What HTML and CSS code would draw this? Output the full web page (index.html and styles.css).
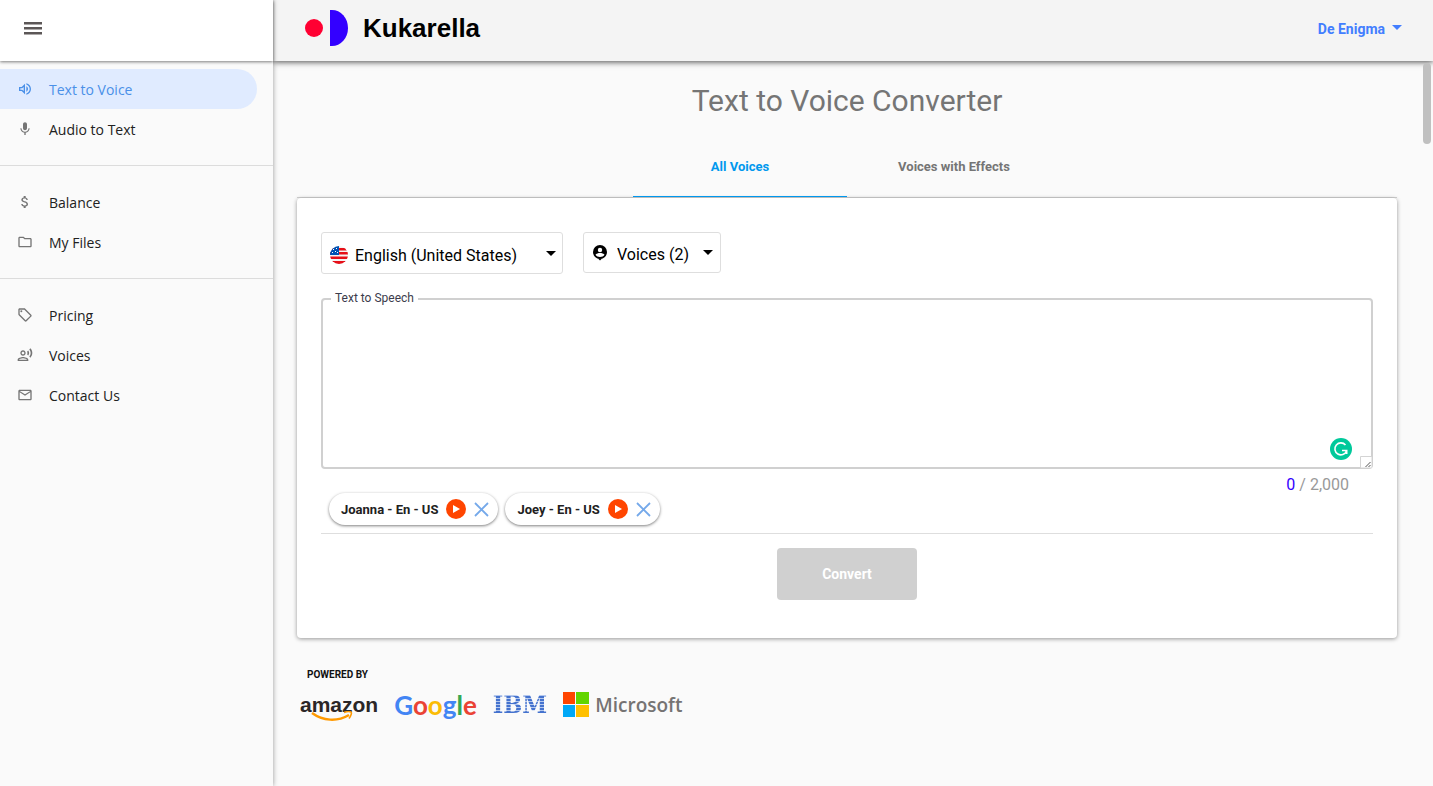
FILE: index.html
```html
<!DOCTYPE html>
<html lang="en">
<head>
  <meta charset="utf-8">
  <title>Text to Voice Converter - Kukarella</title>
  <link rel="stylesheet" href="styles.css">
</head>
<body>
  <div class="app">
    <aside class="sidebar">
      <div class="sidebar-top">
        <button class="menu-btn" type="button" aria-label="Menu">
          <svg width="24" height="24" viewBox="0 0 24 24"><path d="M3 5h18v2.500H3zM3 10h18v2.500H3zM3 15h18v2.500H3z"/></svg>
        </button>
      </div>
      <nav class="nav">
        <a class="nav-item active" href="#">
          <svg viewBox="0 0 24 24"><path d="M3 9v6h4l5 5V4L7 9H3zm7-.17v6.34L7.83 13H5v-2h2.83L10 8.83zM16.5 12c0-1.77-1.02-3.29-2.5-4.03v8.05c1.48-.73 2.5-2.25 2.5-4.02zM14 3.23v2.06c2.89.86 5 3.54 5 6.71s-2.11 5.85-5 6.71v2.06c4.01-.91 7-4.49 7-8.77s-2.99-7.86-7-8.77z"/></svg>
          <span>Text to Voice</span>
        </a>
        <a class="nav-item" href="#">
          <svg viewBox="0 0 24 24"><path d="M12 14c1.66 0 3-1.34 3-3V5c0-1.66-1.34-3-3-3S9 3.34 9 5v6c0 1.66 1.34 3 3 3zm5.3-3c0 3-2.54 5.1-5.3 5.1S6.7 14 6.7 11H5c0 3.41 2.72 6.23 6 6.72V21h2v-3.28c3.28-.48 6-3.3 6-6.72h-1.7z"/></svg>
          <span>Audio to Text</span>
        </a>
        <hr>
        <a class="nav-item" href="#">
          <svg viewBox="0 0 24 24"><path d="M11.8 10.9c-2.27-.59-3-1.2-3-2.15 0-1.09 1.01-1.85 2.7-1.85 1.78 0 2.44.85 2.5 2.1h2.21c-.07-1.72-1.12-3.3-3.21-3.81V3h-3v2.16c-1.94.42-3.5 1.68-3.5 3.61 0 2.31 1.91 3.46 4.7 4.13 2.5.6 3 1.48 3 2.41 0 .69-.49 1.79-2.7 1.79-2.06 0-2.87-.92-2.98-2.1h-2.2c.12 2.19 1.76 3.42 3.68 3.83V21h3v-2.15c1.95-.37 3.5-1.5 3.5-3.55 0-2.84-2.43-3.81-4.7-4.4z"/></svg>
          <span>Balance</span>
        </a>
        <a class="nav-item" href="#">
          <svg viewBox="0 0 24 24"><path d="M20 6h-8l-2-2H4c-1.1 0-2 .9-2 2v12c0 1.1.9 2 2 2h16c1.1 0 2-.9 2-2V8c0-1.1-.9-2-2-2zm0 12H4V6h5.17l2 2H20v10z"/></svg>
          <span>My Files</span>
        </a>
        <hr>
        <a class="nav-item" href="#">
          <svg viewBox="0 0 24 24"><path d="M21.41 11.58l-9-9C12.05 2.22 11.55 2 11 2H4c-1.1 0-2 .9-2 2v7c0 .55.22 1.05.59 1.42l9 9c.36.36.86.58 1.41.58s1.05-.22 1.41-.59l7-7c.37-.36.59-.86.59-1.41s-.23-1.06-.59-1.42zM13 20.01L4 11V4h7v-.01l9 9-7 7.02z"/><circle cx="6.5" cy="6.5" r="1.5"/></svg>
          <span>Pricing</span>
        </a>
        <a class="nav-item" href="#">
          <svg viewBox="0 0 24 24"><path d="M9 13c2.21 0 4-1.79 4-4s-1.79-4-4-4-4 1.79-4 4 1.79 4 4 4zm0-6c1.1 0 2 .9 2 2s-.9 2-2 2-2-.9-2-2 .9-2 2-2zM9 15c-2.67 0-8 1.34-8 4v2h16v-2c0-2.66-5.33-4-8-4zm-6 4c.22-.72 3.31-2 6-2 2.7 0 5.8 1.29 6 2H3zM15.08 7.05c.84 1.18.84 2.71 0 3.89l1.68 1.69c2.02-2.02 2.02-5.07 0-7.27l-1.68 1.69zM20.07 2l-1.63 1.63c2.77 3.02 2.77 7.56 0 10.74L20.07 16c3.9-3.89 3.91-9.95 0-14z"/></svg>
          <span>Voices</span>
        </a>
        <a class="nav-item" href="#">
          <svg viewBox="0 0 24 24"><path d="M22 6c0-1.100-.9-2-2-2H4c-1.100 0-2 .9-2 2v12c0 1.100.9 2 2 2h16c1.100 0 2-.9 2-2V6zm-2 0l-8 5-8-5h16zm0 12H4V8l8 5 8-5v10z"/></svg>
          <span>Contact Us</span>
        </a>
      </nav>
    </aside>

    <div class="main">
      <header class="header">
        <a class="brand" href="#">
          <svg width="44" height="36" viewBox="0 0 44 36"><circle cx="9" cy="18" r="9" fill="#ff0032"/><path d="M25 0h2a16 18 0 0 1 16 18a16 18 0 0 1-16 18h-2z" fill="#3300ff"/></svg>
          <span>Kukarella</span>
        </a>
        <button class="user-btn" type="button">
          <span>De Enigma</span>
          <svg width="10" height="5" viewBox="0 0 10 5"><path d="M0 0h10L5 5z"/></svg>
        </button>
      </header>

      <main class="content">
        <h1>Text to Voice Converter</h1>
        <div class="tabs">
          <button class="tab active" type="button">All Voices</button>
          <button class="tab" type="button">Voices with Effects</button>
        </div>

        <form class="card">
          <div class="filters">
            <div class="select-box language">
              <svg class="lead" width="18" height="18" viewBox="0 0 18 18">
                <clipPath id="round"><circle cx="9" cy="9" r="9"/></clipPath>
                <g clip-path="url(#round)">
                  <path d="M0 0h18v18H0z" fill="#f4f4f4"/>
                  <path d="M0 2h18v2.500H0zM0 6h18v2.500H0zM0 10.500h18V13H0zM0 15h18v3H0z" fill="#e60f18"/>
                  <path d="M0 0h9v9H0z" fill="#0052b4"/>
                  <path d="M3 3h1v1H3zM6 2h1v1H6zM5 5h1v1H5zM2 6h1v1H2zM7 6h1v1H7z" fill="#fff"/>
                </g>
              </svg>
              <select aria-label="Language"><option>English (United States)</option></select>
              <svg class="arrow" width="10" height="5" viewBox="0 0 10 5"><path d="M0 0h10L5 5z"/></svg>
            </div>
            <div class="select-box voices">
              <svg class="lead" width="16" height="16" viewBox="0 0 16 16"><circle cx="8" cy="7" r="7"/><path d="M6 13.500h4l-2 2z"/><circle cx="8" cy="5" r="2.200" fill="#fff"/><path d="M3.500 9.800C4 8.500 6.500 8 8 8s4 .5 4.500 1.800C11.500 11.300 10 12 8 12s-3.500-.7-4.500-2.200z" fill="#fff"/></svg>
              <select aria-label="Voices"><option>Voices (2)</option></select>
              <svg class="arrow" width="10" height="5" viewBox="0 0 10 5"><path d="M0 0h10L5 5z"/></svg>
            </div>
          </div>

          <div class="text-field">
            <label for="speech">Text to Speech</label>
            <textarea id="speech"></textarea>
            <svg class="grammar" width="22" height="22" viewBox="0 0 22 22"><circle cx="11" cy="11" r="11" fill="#00c99b"/><path d="M15.500 7A6 6 0 1 0 16.500 13M12 12.500h4.700V16" fill="none" stroke="#fff" stroke-width="1.600"/></svg>
            <svg class="grip" width="12" height="12" viewBox="0 0 12 12"><path d="M.5 12V.5H12V12z" fill="#fff" stroke="#d4d4d4"/><path d="M5.500 11l5-5M8.500 11l2-2" stroke="#555"/></svg>
          </div>
          <p class="counter"><span>0</span> / 2,000</p>

          <div class="chips">
            <div class="chip">
              Joanna - En - US
              <button type="button" aria-label="Play Joanna"><svg width="20" height="20" viewBox="0 0 20 20"><circle cx="10" cy="10" r="10" fill="#ff4500"/><path d="M7 6v8l7-4z" fill="#fff"/></svg></button>
              <button type="button" aria-label="Remove Joanna"><svg width="15" height="15" viewBox="0 0 15 15"><path d="M1 1l13 13M14 1L1 14" stroke="#75a9ea" stroke-width="1.800"/></svg></button>
            </div>
            <div class="chip">
              Joey - En - US
              <button type="button" aria-label="Play Joey"><svg width="20" height="20" viewBox="0 0 20 20"><circle cx="10" cy="10" r="10" fill="#ff4500"/><path d="M7 6v8l7-4z" fill="#fff"/></svg></button>
              <button type="button" aria-label="Remove Joey"><svg width="15" height="15" viewBox="0 0 15 15"><path d="M1 1l13 13M14 1L1 14" stroke="#75a9ea" stroke-width="1.800"/></svg></button>
            </div>
          </div>

          <div class="actions">
            <button class="convert" type="submit" disabled>Convert</button>
          </div>
        </form>

        <section class="powered">
          <h2>POWERED BY</h2>
          <div class="logos">
            <div class="amazon">
              amazon
              <svg width="42" height="11" viewBox="0 0 42 11"><path d="M1 2c11 8 25 9 37 2" fill="none" stroke="#ff9900" stroke-width="2.500"/><path d="M33 1.500c3-1 6-1 7-.5s0 4-2 6.500" fill="none" stroke="#ff9900" stroke-width="1.600"/></svg>
            </div>
            <div class="google"><span class="blue">G</span><span class="red">o</span><span class="yellow">o</span><span class="blue">g</span><span class="green">l</span><span class="red">e</span></div>
            <div class="ibm">IBM</div>
            <div class="microsoft">
              <svg width="26" height="26" viewBox="0 0 26 26"><path d="M0 0h12v12H0z" fill="#ff4500"/><path d="M13 0h13v12H13z" fill="#62d500"/><path d="M0 13h12v12H0z" fill="#00a8f7"/><path d="M13 13h13v12H13z" fill="#ffc000"/></svg>
              Microsoft
            </div>
          </div>
        </section>
      </main>
      <div class="scroll-thumb"></div>
    </div>
  </div>
</body>
</html>
```
FILE: styles.css
```css
* { box-sizing: border-box; }
body {
  margin: 0;
  font-family: Roboto, sans-serif;
  background: #fafafa;
  color: #212121;
}
button {
  border: 0;
  padding: 0;
  background: none;
  font-family: inherit;
  cursor: pointer;
}
svg { display: block; flex-shrink: 0; }
.app {
  display: grid;
  grid-template-columns: 273px 1fr;
  min-height: 100vh;
}

/* sidebar */
.sidebar {
  position: relative;
  z-index: 2;
  background: #fafafa;
  box-shadow: 0 0 5px rgba(0,0,0,0.4);
}
.sidebar-top {
  display: flex;
  align-items: center;
  height: 61px;
  padding: 0 21px 4px;
  background: #fff;
  box-shadow: 0 1px 3px rgba(0,0,0,0.5);
}
.menu-btn { fill: #5c5757; }
.nav { padding-top: 8px; }
.nav-item {
  display: flex;
  align-items: center;
  gap: 16px;
  height: 40px;
  margin-right: 16px;
  padding-left: 17px;
  border-radius: 0 20px 20px 0;
  font: 14px/20px "Open Sans", sans-serif;
  color: #212121;
  text-decoration: none;
}
.nav-item span { padding-top: 2px; }
.nav-item svg {
  width: 16px;
  height: 16px;
  fill: #757575;
}
.nav-item.active {
  background: #e0ebff;
  color: #4a90e8;
}
.nav-item.active svg { fill: #4a90e8; }
.nav hr {
  margin: 16px 0;
  border: 0;
  border-top: 1px solid #dcdcdc;
}

/* header */
.main { position: relative; }
.header {
  display: flex;
  justify-content: space-between;
  align-items: center;
  height: 61px;
  padding: 0 31px 6px 32px;
  background: #f4f4f4;
  box-shadow: 0 1px 6px rgba(0,0,0,0.7);
}
.brand {
  display: flex;
  align-items: center;
  gap: 14px;
  font: bold 26px/32px "Liberation Sans", Arial, sans-serif;
  color: #000;
  text-decoration: none;
}
.user-btn {
  display: flex;
  align-items: center;
  gap: 7px;
  font-size: 14px;
  font-weight: bold;
  color: #427eff;
  fill: #427eff;
}
.user-btn span { padding-top: 2px; }
.scroll-thumb {
  position: absolute;
  top: 63px;
  right: 2px;
  width: 8px;
  height: 81px;
  border-radius: 4px;
  background: #c0c0c0;
}

/* content */
.content { padding: 20px 36px 40px 24px; }
h1 {
  margin: 0;
  font-size: 30px;
  font-weight: normal;
  line-height: 40px;
  text-align: center;
  color: #757575;
}
.tabs {
  display: flex;
  justify-content: center;
  margin-top: 16px;
  border-bottom: 1px solid #d2d2d2;
}
.tab {
  width: 214px;
  height: 60px;
  border-bottom: 1px solid transparent;
  font-size: 13px;
  font-weight: bold;
  color: #757575;
}
.tab.active {
  color: #0098ee;
  border-bottom-color: #0098ee;
}
.card {
  padding: 34px 24px 38px;
  border-radius: 4px;
  background: #fff;
  box-shadow: 0 1px 4px rgba(0,0,0,0.4);
}
.filters {
  display: flex;
  align-items: flex-start;
  gap: 20px;
}
.select-box {
  position: relative;
  display: flex;
  align-items: center;
}
.select-box select {
  width: 100%;
  height: 42px;
  border: 1px solid #dedede;
  border-radius: 3px;
  background: transparent;
  font: 16px/24px Roboto, sans-serif;
  color: #000;
  appearance: none;
}
.select-box .lead {
  position: absolute;
  left: 9px;
}
.select-box .arrow {
  position: absolute;
  right: 7px;
  pointer-events: none;
}
.language { width: 242px; }
.language .lead { top: 14px; }
.language select { padding: 6px 24px 0 33px; }
.voices { width: 138px; }
.voices select {
  height: 41px;
  padding: 4px 24px 0 33px;
}
.voices .arrow { right: 8px; }
.text-field {
  position: relative;
  display: flex;
  margin-top: 24px;
}
.text-field label {
  position: absolute;
  top: -8px;
  left: 10px;
  padding: 0 4px;
  background: #fff;
  font-size: 12px;
  line-height: 16px;
  color: #3c3c4c;
}
.text-field textarea {
  width: 100%;
  height: 171px;
  padding: 16px;
  border: 2px solid #d0d0d0;
  border-radius: 4px;
  background: #fff;
  font: 16px/24px Roboto, sans-serif;
  resize: both;
}
.grammar {
  position: absolute;
  right: 21px;
  bottom: 9px;
}
.grip {
  position: absolute;
  right: 1px;
  bottom: 1px;
  pointer-events: none;
}
.counter {
  margin: 4px 24px 0 0;
  font-size: 16px;
  line-height: 24px;
  text-align: right;
  color: #999;
}
.counter span { color: #3300ff; }
.chips {
  display: flex;
  gap: 7px;
  margin-top: -4px;
  padding: 0 8px 8px;
  border-bottom: 1px solid #dedede;
}
.chip {
  display: flex;
  align-items: center;
  gap: 8px;
  height: 32px;
  padding: 0 9px 0 12px;
  border-radius: 16px;
  background: #fff;
  box-shadow: 0 1px 3px rgba(0,0,0,0.5);
  font-size: 13px;
  font-weight: bold;
}
.actions {
  display: flex;
  justify-content: center;
  margin-top: 14px;
}
.convert {
  width: 140px;
  height: 52px;
  border-radius: 4px;
  background: #d0d0d0;
  font-size: 14px;
  font-weight: bold;
  color: #fff;
}

/* powered by */
.powered { padding: 29px 3px 0; }
.powered h2 {
  margin: 0 0 7px 7px;
  font-size: 10px;
  line-height: 16px;
  color: #111;
}
.logos {
  display: flex;
  align-items: center;
  gap: 16px;
  height: 30px;
}
.amazon {
  position: relative;
  font: bold 21px/28px "Liberation Sans", Arial, sans-serif;
  color: #2b2626;
}
.amazon svg {
  position: absolute;
  top: 20px;
  left: 11px;
}
.google { font: bold 26px/30px Lato, sans-serif; }
.blue { color: #4285f4; }
.red { color: #ea4335; }
.yellow { color: #fbbc05; }
.green { color: #34a853; }
.ibm {
  font: bold 25px/30px "DejaVu Serif Condensed", "DejaVu Serif", serif;
  color: transparent;
  background: repeating-linear-gradient(#4472ce 0 2px, #b4c8ee 2px 3px);
  background-clip: text;
}
.microsoft {
  display: flex;
  align-items: center;
  gap: 6px;
  font: 600 19px/26px "Open Sans", sans-serif;
  color: #757373;
}
```
